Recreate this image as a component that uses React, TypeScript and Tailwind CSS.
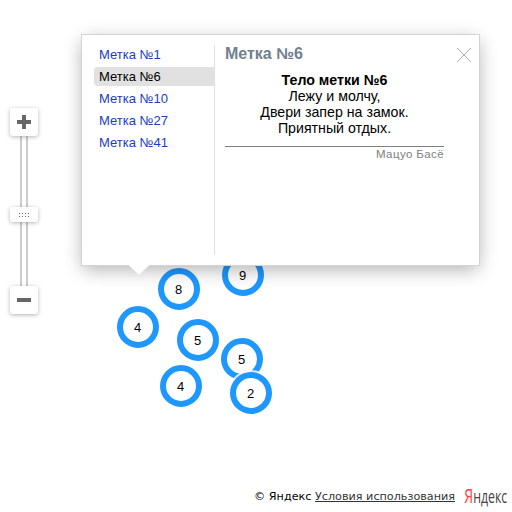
const clusters = [
  { n: 8, x: 179, y: 289 },
  { n: 9, x: 243, y: 275 },
  { n: 4, x: 138, y: 327 },
  { n: 5, x: 198, y: 340 },
  { n: 5, x: 242, y: 359 },
  { n: 4, x: 181, y: 386 },
  { n: 2, x: 251, y: 393 },
];

const items = ["Метка №1", "Метка №6", "Метка №10", "Метка №27", "Метка №41"];

function Cluster({ n, x, y }: { n: number; x: number; y: number }) {
  return (
    <div
      className="absolute flex h-[42px] w-[42px] items-center justify-center rounded-full border-[6px] border-[#1e98ff] bg-white pr-px pt-px text-[13px] leading-4 shadow-[0_0_0_2px_rgba(255,255,255,0.8)]"
      style={{ left: x - 21, top: y - 21 }}
    >
      {n}
    </div>
  );
}

function ZoomControl() {
  const button =
    "relative flex w-7 items-center justify-center rounded-[3px] bg-white shadow-[0_1px_4px_rgba(0,0,0,0.3)]";
  return (
    <div className="absolute left-[10px] top-[108px] flex w-7 flex-col items-center">
      <div className={button + " h-7"}>
        <svg width="14" height="14" shapeRendering="crispEdges">
          <path d="M5 0h4v5h5v4H9v5H5V9H0V5h5z" fill="#666" />
        </svg>
      </div>
      <div className="h-[71px] w-2 border-x-2 border-[#ccc] bg-white" />
      <div className={button + " h-[15px]"}>
        <svg className="mt-px" width="12" height="4" shapeRendering="crispEdges" fill="#666">
          {[1, 4, 7, 10].map((x) => (
            <g key={x}>
              <rect x={x} y="0" width="1" height="1" />
              <rect x={x} y="3" width="1" height="1" />
            </g>
          ))}
        </svg>
      </div>
      <div className="h-16 w-2 border-x-2 border-[#ccc] bg-white" />
      <div className={button + " h-7"}>
        <div className="h-1 w-[14px] bg-[#666]" />
      </div>
    </div>
  );
}

function Balloon() {
  return (
    <div className="absolute left-[81px] top-[34px] h-[232px] w-[399px] border border-[#d4d4d4] bg-white shadow-[0_5px_18px_-2px_rgba(0,0,0,0.33)]">
      <div className="flex h-full pb-[10px] pl-3 pt-[10px]">
        <ul className="flex w-[121px] flex-col gap-[3px] border-r border-[#e0e0e0] text-[13px] leading-[19px]">
          {items.map((item, i) => (
            <li
              key={item}
              className={
                i === 1
                  ? "rounded-l-[4px] bg-[#e1e1e1] pl-[5px] text-black"
                  : "pl-[5px] text-[#1a3dc1]"
              }
            >
              {item}
            </li>
          ))}
        </ul>
        <div className="ml-[10px] w-[219px]">
          <h2 className="text-[16px] font-bold leading-[18px] text-[#708090]">Метка №6</h2>
          <p className="mt-[9px] whitespace-nowrap text-center text-[14.2px] leading-4">
            <b>Тело метки №6</b>
            <br />
            Лежу и молчу,
            <br />
            Двери запер на замок.
            <br />
            Приятный отдых.
          </p>
          <div className="mt-[10px] border-t border-[#808080] pt-px text-right text-[11.5px] leading-[13px] tracking-[0.4px] text-[#808080]">
            Мацуо Басё
          </div>
        </div>
        <svg className="ml-[13px] mt-[3px]" width="14" height="14">
          <path d="M0 0L14 14M14 0L0 14" stroke="#b0b0b0" strokeWidth="1" />
        </svg>
      </div>
      <svg className="absolute left-[46px] top-[230px]" width="22" height="11">
        <path d="M0.5 0L11 10.5L21.5 0z" fill="#fff" />
        <path d="M0.5 0.5L11 10.5L21.5 0.5" fill="none" stroke="#d4d4d4" strokeWidth="0.6" />
      </svg>
    </div>
  );
}

export default function App() {
  return (
    <main className="relative h-[512px] w-[512px] overflow-hidden bg-white font-['Liberation_Sans',sans-serif] text-black">
      {clusters.map((c) => (
        <Cluster key={`${c.x}-${c.y}`} {...c} />
      ))}
      <ZoomControl />
      <Balloon />
      <footer className="flex h-full items-end justify-end pr-px">
        <div className="mb-[7px] whitespace-nowrap font-['DejaVu_Sans',sans-serif] text-[11.2px] leading-4">
          © Яндекс <a className="text-[#333] underline">Условия использования</a>
        </div>
        <svg className="ml-[9px] font-['Open_Sans',sans-serif]" width="47" height="30" overflow="visible">
          <text transform="translate(0.3 21) scale(0.7 1)" textLength="61.3" lengthAdjust="spacingAndGlyphs" fill="#444" fontSize="17.5">
            <tspan fontSize="20" fill="#ff4040">Я</tspan>ндекс
          </text>
        </svg>
      </footer>
    </main>
  );
}
